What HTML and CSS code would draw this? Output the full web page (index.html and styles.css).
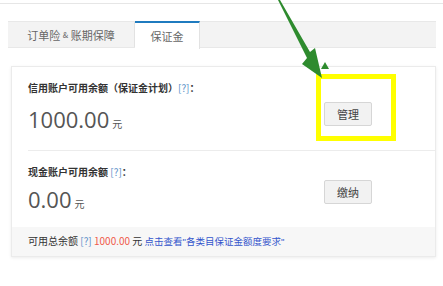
FILE: index.html
```html
<!DOCTYPE html>
<html lang="zh-CN">
<head>
    <meta charset="UTF-8">
    <title>保证金</title>
    <link rel="stylesheet" href="styles.css">
</head>
<body>
    <div class="page">
        <div class="top-line"></div>

        <div class="tabs">
            <div class="tab">订单险&nbsp;<span class="amp">&amp;</span>&nbsp;账期保障</div>
            <div class="tab active">保证金</div>
        </div>

        <div class="card">
            <div class="row first">
                <div class="info">
                    <div class="label">信用账户可用余额（保证金计划）<span class="help">[?]</span>：</div>
                    <div class="amount">1000.00<span class="unit">元</span></div>
                </div>
                <button class="btn">管理</button>
            </div>
            <div class="row">
                <div class="info">
                    <div class="label">现金账户可用余额 <span class="help">[?]</span>：</div>
                    <div class="amount">0.00<span class="unit">元</span></div>
                </div>
                <button class="btn">缴纳</button>
            </div>
            <div class="card-footer">
                可用总余额 <span class="help">[?]</span> <span class="money">1000.00</span> 元 <a class="link">点击查看"各类目保证金额度要求"</a>
            </div>
        </div>

        <!-- annotation overlay -->
        <div class="highlight"></div>
        <svg class="arrow" width="80" height="90" viewBox="0 0 80 90">
            <polygon points="6,0 8,0 38,52 43,48 50,78 30,64 35,58" fill="#2e8b2e"/>
            <polygon points="53,62 57,69 49,69" fill="#2e8b2e"/>
        </svg>
    </div>
</body>
</html>
```

FILE: styles.css
```css
* {
    margin: 0;
    padding: 0;
    box-sizing: border-box;
}

body {
    background-color: #fff;
    font-family: "Noto Sans CJK SC", "Noto Sans", sans-serif;
    font-size: 11px;
    color: #333;
}

.page {
    position: relative;
    width: 443px;
    height: 286px;
    padding: 3px 7px 0 8px;
}

.top-line {
    height: 1px;
    background-color: #e6e6e6;
    margin: 0 -8px 17px -8px;
}

.tabs {
    display: flex;
    height: 27px;
    background-color: #f3f3f3;
    border-top: 1px solid #e8e8e8;
    border-bottom: 1px solid #e8e8e8;
}

.tab {
    display: flex;
    align-items: center;
    justify-content: center;
    width: 127px;
    color: #666;
    font-size: 11px;
    border-right: 1px solid #e2e2e2;
}

.amp {
    font-size: 8px;
}

.tab.active {
    width: 65px;
    background-color: #fff;
    border-top: 2px solid #1f7bbf;
    margin-top: -1px;
    height: 28px;
    padding-bottom: 1px;
}

.card {
    margin: 18px 0 0 3px;
    border: 1px solid #ebebeb;
    box-shadow: 0 1px 3px rgba(0, 0, 0, 0.08);
}

.row {
    display: flex;
    align-items: flex-start;
    justify-content: space-between;
    margin-left: 16px;
    padding: 14px 63px 10px 0;
    border-top: 1px solid #ececec;
}

.row.first {
    border-top: none;
    padding-bottom: 13px;
}

.label {
    font-weight: bold;
    font-size: 10px;
    color: #333;
    line-height: 14px;
}

.help {
    color: #5b8fc9;
    font-weight: normal;
}

.amount {
    font-family: "Open Sans", "Noto Sans", sans-serif;
    font-size: 22px;
    color: #555;
    margin-top: 7px;
    line-height: 26px;
}

.row.first .amount {
    margin-top: 11px;
}

.unit {
    font-family: "Noto Sans CJK SC", sans-serif;
    font-size: 10px;
    margin-left: 3px;
}

.btn {
    width: 48px;
    height: 24px;
    margin-top: 15px;
    background-color: #f2f2f2;
    border: 1px solid #d6d6d6;
    border-radius: 2px;
    font-family: "Noto Sans CJK SC", sans-serif;
    font-size: 11px;
    color: #444;
}

.row.first .btn {
    margin-top: 21px;
}

.card-footer {
    background-color: #f7f7f7;
    padding: 6px 16px 7px 16px;
    font-size: 10px;
    color: #333;
    line-height: 15px;
}

.money {
    color: #f05a4a;
}

.link {
    color: #3355cc;
    font-size: 9.5px;
    font-family: "Liberation Sans", "Noto Sans CJK SC", sans-serif;
}

.highlight {
    position: absolute;
    left: 316px;
    top: 74px;
    width: 80px;
    height: 67px;
    border: 5px solid #ffff00;
}

.arrow {
    position: absolute;
    left: 272px;
    top: 0;
}
```
